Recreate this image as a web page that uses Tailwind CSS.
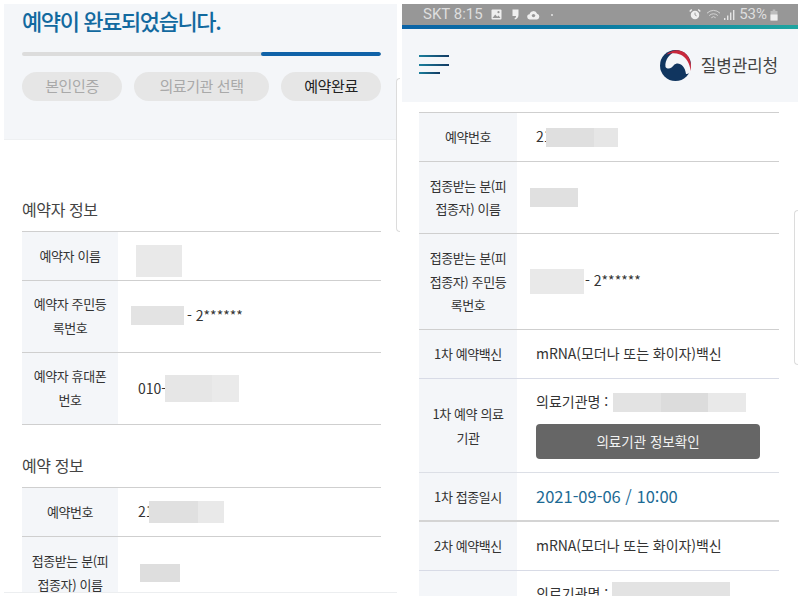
<!DOCTYPE html>
<html lang="ko"><head><meta charset="utf-8"><script src="https://cdn.jsdelivr.net/npm/@tailwindcss/browser@4"></script></head>
<body class="bg-white">
<div class="relative flex w-[800px] h-[600px] overflow-hidden bg-white pt-1 text-[#333] font-['Noto_Sans_CJK_KR','Noto_Sans',sans-serif] tracking-[-0.4px]">

<!-- LEFT -->
<div class="ml-1 w-[393px] h-[589px] overflow-hidden border-b border-[#eceef0] shrink-0">
  <div class="h-[136px] bg-[#f4f6f9] border-b border-[#eef0f2] pl-[18px] pr-[16px]">
    <h1 class="pt-[1px] h-[48px] text-[22px] leading-[30px] font-medium text-[#12699f] tracking-[-1.4px]">예약이 완료되었습니다.</h1>
    <div class="flex h-1 rounded-full overflow-hidden bg-[#dcdcdc]"><div class="w-[239px]"></div><div class="flex-1 bg-[#0f62a8] rounded-full"></div></div>
    <div class="mt-4 flex gap-3 text-[15px] text-center leading-[28px]">
      <div class="w-[100px] h-[29px] rounded-full bg-[#e6e6e6] text-[#a9a9a9]">본인인증</div>
      <div class="w-[135px] h-[29px] rounded-full bg-[#e6e6e6] text-[#a9a9a9]">의료기관 선택</div>
      <div class="w-[100px] h-[29px] rounded-full bg-[#e6e6e6] text-[#222]">예약완료</div>
    </div>
  </div>
  <div class="pl-[18px] pr-[16px]">
    <h2 class="mt-[57px] h-[34px] text-[16px] leading-[24px] text-[#444]">예약자 정보</h2>
    <div class="border-t border-[#cfcfcf] text-[13px] leading-[23.5px]">
      <div class="flex h-[49px] border-b border-[#cfcfcf]">
        <div class="w-[96px] bg-[#f4f6f9] flex items-center justify-center text-center">예약자 이름</div>
        <div class="flex-1 flex items-start pl-[18px] pt-[13px]"><div class="w-[46px] h-[32px] bg-[#e9e9e9]"></div></div>
      </div>
      <div class="flex h-[72px] border-b border-[#cfcfcf]">
        <div class="w-[96px] bg-[#f4f6f9] flex items-center justify-center text-center pb-[2px]">예약자 주민등<br>록번호</div>
        <div class="flex-1 flex items-center pl-[13px] pb-[2px] text-[14px]"><div class="w-[53px] h-[19px] bg-[#e3e3e3]"></div><span class="ml-[3px] tracking-[0px]">- 2******</span></div>
      </div>
      <div class="flex h-[72px] border-b border-[#cfcfcf]">
        <div class="w-[96px] bg-[#f4f6f9] flex items-center justify-center text-center pb-[2px]">예약자 휴대폰<br>번호</div>
        <div class="flex-1 flex items-center pl-[20px] text-[14px] tracking-[0px]">010-<div class="flex h-[27px] ml-[-1px]"><div class="w-[47px] bg-[#e6e6e6]"></div><div class="w-[27px] bg-[#eaeaea]"></div></div></div>
      </div>
    </div>
    <h2 class="mt-[28px] h-[34px] text-[16px] leading-[24px] text-[#444]">예약 정보</h2>
    <div class="border-t border-[#cfcfcf] text-[13px] leading-[23.5px]">
      <div class="flex h-[49px] border-b border-[#cfcfcf]">
        <div class="w-[96px] bg-[#f4f6f9] flex items-center justify-center text-center">예약번호</div>
        <div class="flex-1 flex items-center pl-[20px] text-[14px] tracking-[0px]"><span class="mr-[-5px]">21</span><div class="relative w-[49px] h-[22px] bg-[#e0e0e0]"></div><div class="w-[26px] h-[22px] bg-[#e9e9e9]"></div></div>
      </div>
      <div class="flex h-[72px] border-b border-[#cfcfcf]">
        <div class="w-[96px] bg-[#f4f6f9] flex justify-center text-center pt-[12px]"><div>접종받는 분(피<br>접종자) 이름</div></div>
        <div class="flex-1 flex items-start pl-[22px] pt-[27px]"><div class="w-[40px] h-[18px] bg-[#dedede]"></div></div>
      </div>
    </div>
  </div>
</div>

<!-- RIGHT -->
<div class="ml-[5px] w-[396px] h-[592px] overflow-hidden shrink-0">
  <div class="h-[21px] bg-[#979797] flex items-center justify-between pl-[21px] pr-[20px] text-[#dedede] text-[15px] tracking-[0px] font-['Roboto',sans-serif]">
    <div class="flex items-center">
      <span>SKT 8:15</span>
      <svg class="ml-[8px]" width="11" height="11" viewBox="0 0 11 11"><rect x="0.5" y="0.5" width="10" height="10" rx="1" fill="#efefef"/><circle cx="7.5" cy="3.2" r="1.1" fill="#979797"/><path d="M1.5 9l2.7-3.6 2 2.4 1.3-1.3 2 2.5z" fill="#979797"/></svg>
      <svg class="ml-[10px]" width="7" height="11" viewBox="0 0 7 11"><path d="M0.5 0.5h6v5.5c0 2.4-1.6 4-3.6 4.5l-0.4-1.2c1-0.4 1.5-1.2 1.6-2.3H0.5z" fill="#efefef"/></svg>
      <svg class="ml-[8px]" width="13" height="10" viewBox="0 0 13 10"><path d="M3 9.5a2.6 2.6 0 0 1-0.4-5.2 3.9 3.9 0 0 1 7.5-0.6 3 3 0 0 1 0 5.8z" fill="#efefef"/><circle cx="6.5" cy="5.6" r="1.7" fill="#979797"/></svg>
      <span class="ml-[11px] block w-[2px] h-[2px] rounded-full bg-[#e4e4e4]"></span>
    </div>
    <div class="flex items-center">
      <svg width="12" height="13" viewBox="0 0 13 13"><circle cx="6.5" cy="7" r="4.6" fill="#efefef"/><path d="M0.8 3.2 3 1M12.2 3.2 10 1" stroke="#efefef" stroke-width="1.6"/><path d="M6.5 4.5V7l1.8 1" stroke="#979797" stroke-width="1" fill="none"/></svg>
      <svg class="ml-[5px]" width="15" height="12" viewBox="0 0 15 12" fill="none" stroke="#d4d4d4" stroke-width="1"><path d="M1 4.2a9 9 0 0 1 13 0"/><path d="M3.2 6.6a6 6 0 0 1 8.6 0"/><path d="M5.3 8.8a3 3 0 0 1 4.4 0"/></svg>
      <svg class="ml-[2px]" width="13" height="12" viewBox="0 0 13 12" fill="#e4e4e4"><rect x="1" y="9" width="1.4" height="2"/><rect x="4" y="6.5" width="1.4" height="4.5"/><rect x="7" y="3.5" width="1.4" height="7.5"/><rect x="10" y="1" width="1.4" height="10"/></svg>
      <span class="ml-[3px]">53%</span>
      <svg class="ml-[3px]" width="8" height="12" viewBox="0 0 8 12"><path d="M2.7 0.5h2.6V2h2.2v9.5H0.5V2h2.2z" fill="#bdbdbd"/><rect x="0.5" y="5.5" width="7" height="6" fill="#efefef"/></svg>
    </div>
  </div>
  <div class="h-[4px] bg-gradient-to-r from-[#0b63a6] via-[#0b7ba3] to-[#1fa5a0]"></div>
  <div class="h-[73px] bg-[#f4f6f9] flex items-center justify-between pl-[17px] pr-[20px]">
    <div class="flex flex-col gap-[6.5px] mb-[2px]">
      <div class="w-[30px] h-[2px] bg-gradient-to-r from-[#1a7f9c] to-[#123a63]"></div>
      <div class="w-[30px] h-[2px] bg-gradient-to-r from-[#1a7f9c] to-[#123a63]"></div>
      <div class="w-[21px] h-[2px] bg-gradient-to-r from-[#1a7f9c] to-[#123a63]"></div>
    </div>
    <div class="flex items-center mb-[1px]">
      <svg width="33" height="33" viewBox="0 0 33 33">
        <circle cx="16.5" cy="16.5" r="15.5" fill="#10355f"/>
        <path d="M6.5 18C5.5 11 11 3 18 3 26 3 32 11 32.5 22 31 24 28.5 25.5 27 25 26 16 19 12 15 16 13 19 9 21 6.5 18Z" fill="#f4f6f9"/>
        <path d="M7 6C13 0 22 0 27 5 31 9 33 15 31.5 22 31 14 27 8 21 5.5 16 3.5 11 4 7 6Z" fill="#c8283c"/>
      </svg>
      <span class="ml-[9px] text-[17px] leading-[24px] text-[#444] tracking-[-0.2px]">질병관리청</span>
    </div>
  </div>
  <div class="mt-[10px] ml-[17px] w-[360px] border-t border-[#cfcfcf] text-[13px] leading-[23.5px]">
    <div class="flex h-[49px] border-b border-[#cfcfcf]">
      <div class="w-[98px] bg-[#f4f6f9] flex items-center justify-center text-center">예약번호</div>
      <div class="flex-1 flex items-center pl-[19px] text-[14px] tracking-[0px]"><span class="mr-[-6px]">21</span><div class="relative w-[48px] h-[19px] bg-[#dfdfdf]"></div><div class="w-[24px] h-[19px] bg-[#e6e6e6]"></div></div>
    </div>
    <div class="flex h-[72px] border-b border-[#cfcfcf]">
      <div class="w-[98px] bg-[#f4f6f9] flex items-center justify-center text-center pb-[1px]">접종받는 분(피<br>접종자) 이름</div>
      <div class="flex-1 flex items-center pl-[13px]"><div class="w-[48px] h-[19px] bg-[#e0e0e0]"></div></div>
    </div>
    <div class="flex h-[96px] border-b border-[#cfcfcf]">
      <div class="w-[98px] bg-[#f4f6f9] flex items-center justify-center text-center">접종받는 분(피<br>접종자) 주민등<br>록번호</div>
      <div class="flex-1 flex items-center pl-[13px] text-[14px]"><div class="w-[54px] h-[25px] bg-[#e9e9e9]"></div><span class="ml-[1px] tracking-[0px] mb-[1px]">- 2******</span></div>
    </div>
    <div class="flex h-[49px] border-b border-[#d8dbe6]">
      <div class="w-[98px] bg-[#f4f6f9] flex items-center justify-center text-center">1차 예약백신</div>
      <div class="flex-1 flex items-center pl-[19px] text-[14px] tracking-[-0.05px]">mRNA(모더나 또는 화이자)백신</div>
    </div>
    <div class="flex h-[94px] border-b border-[#dcdfe6]">
      <div class="w-[98px] bg-[#f4f6f9] flex items-center justify-center text-center">1차 예약 의료<br>기관</div>
      <div class="flex-1 pl-[19px] pt-[13px] text-[14px] tracking-[0px]">
        <div class="flex items-center h-[20px]"><span>의료기관명 :</span><div class="ml-[5px] flex h-[19px]"><div class="w-[48px] bg-[#e3e3e3]"></div><div class="w-[47px] bg-[#dcdcdc]"></div><div class="w-[38px] bg-[#e9e9e9]"></div></div></div>
        <div class="mt-[12px] w-[224px] h-[35px] rounded-[4px] bg-[#666] text-[#f2f2f2] text-[13.5px] leading-[35px] text-center">의료기관 정보확인</div>
      </div>
    </div>
    <div class="flex h-[49px] border-b-2 border-[#d4d4d4]">
      <div class="w-[98px] bg-[#f4f6f9] flex items-center justify-center text-center">1차 접종일시</div>
      <div class="flex-1 flex items-center pl-[19px] text-[16.5px] tracking-[0px] text-[#1c6a94]">2021-09-06 / 10:00</div>
    </div>
    <div class="flex h-[49px] border-b border-[#d8dbe6]">
      <div class="w-[98px] bg-[#f4f6f9] flex items-center justify-center text-center">2차 예약백신</div>
      <div class="flex-1 flex items-center pl-[19px] text-[14px] tracking-[-0.05px]">mRNA(모더나 또는 화이자)백신</div>
    </div>
    <div class="flex h-[94px]">
      <div class="w-[98px] bg-[#f4f6f9]"></div>
      <div class="flex-1 pl-[19px] pt-[13px] text-[14px] tracking-[0px]">
        <div class="flex items-center h-[20px]"><span>의료기관명 :</span><div class="ml-[4px] h-[25px] w-[118px] bg-[#e3e3e3]"></div></div>
      </div>
    </div>
  </div>
</div>

<!-- edge handles over the page -->
<div class="absolute left-[396px] top-[78px] w-[4px] h-[154px] rounded-l-[4px] border-l border-y border-[#dcdcdc]"></div>
<div class="absolute left-[794px] top-[210px] w-[4px] h-[155px] rounded-l-[4px] border-l border-y border-[#dcdcdc]"></div>
</div>
</body></html>
